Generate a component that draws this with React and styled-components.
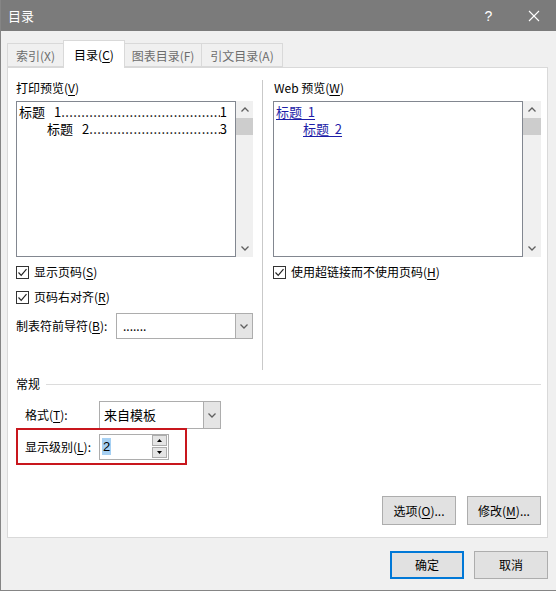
import React from "react";
import styled, { createGlobalStyle } from "styled-components";

const GlobalStyle = createGlobalStyle`
  html, body {
    margin: 0;
    padding: 0;
    background: #ffffff;
  }
  body {
    font-family: "Noto Sans CJK SC", "Noto Sans", "Liberation Sans", sans-serif;
    font-size: 12px;
    color: #000;
  }
`;

const Window = styled.div`
  width: 556px;
  height: 591px;
  box-sizing: border-box;
  background: #f0f0f0;
  border-left: 1px solid #858585;
  border-bottom: 1px solid #858585;
  display: flex;
  flex-direction: column;
  overflow: hidden;
`;

const TitleBar = styled.div`
  height: 31px;
  flex: none;
  background: #7b7b7b;
  color: #fff;
  display: flex;
  align-items: center;
  padding-left: 7px;
  font-size: 13px;
  line-height: 16px;
`;

const TitleText = styled.span`
  flex: 1;
`;

const TitleButton = styled.span`
  width: 45px;
  height: 31px;
  display: flex;
  align-items: center;
  justify-content: center;
  font-size: 14px;
  font-family: "Liberation Sans", sans-serif;
  color: #fff;
`;

const Body = styled.div`
  flex: 1;
  display: flex;
  flex-direction: column;
  padding: 9px 8px 0 6px;
`;

const TabStrip = styled.div`
  height: 27px;
  display: flex;
  align-items: flex-end;
  position: relative;
  z-index: 1;
`;

const Tab = styled.div`
  box-sizing: border-box;
  width: ${(p) => p.$w}px;
  height: ${(p) => (p.$active ? 28 : 24)}px;
  margin-bottom: ${(p) => (p.$active ? -1 : 0)}px;
  background: ${(p) => (p.$active ? "#fff" : "#f0f0f0")};
  border: 1px solid #d9d9d9;
  border-bottom: ${(p) => (p.$active ? "none" : "1px solid #d9d9d9")};
  margin-left: ${(p) => (p.$first ? 0 : -1)}px;
  color: ${(p) => (p.$active ? "#000" : "#6d6d6d")};
  display: flex;
  align-items: center;
  justify-content: center;
  line-height: 16px;
  padding-top: ${(p) => (p.$active ? 0 : 1)}px;
`;

const Panel = styled.div`
  height: 471px;
  box-sizing: border-box;
  background: #fff;
  border: 1px solid #d9d9d9;
  padding: 12px 6px 0 8px;
  display: flex;
  flex-direction: column;
`;

const Columns = styled.div`
  height: 290px;
  display: flex;
`;

const Column = styled.div`
  width: ${(p) => p.$w}px;
  flex: none;
  display: flex;
  flex-direction: column;
`;

const Separator = styled.div`
  width: 1px;
  background: #c9c9c9;
  margin: 0 10px 0 9px;
`;

const Label = styled.div`
  height: 16px;
  line-height: 16px;
  white-space: nowrap;
  padding-left: ${(p) => p.$indent || 0}px;
`;

const Key = styled.span`
  text-decoration: underline;
  text-underline-offset: 2px;
`;

const PreviewRow = styled.div`
  margin-top: 5px;
  height: 156px;
  display: flex;
`;

const ListBox = styled.div`
  flex: 1;
  min-width: 0;
  overflow: hidden;
  box-sizing: border-box;
  border: 1px solid #828790;
  background: #fff;
  padding: 1px 8px 0 2px;
  font-size: 13px;
  line-height: 17px;
`;

const TocLine = styled.div`
  display: flex;
  white-space: nowrap;
  padding-left: ${(p) => p.$level * 28}px;
`;

const TocNum = styled.span`
  margin-left: 9px;
`;

const Leader = styled.span`
  flex: 1;
  width: 0;
  min-width: 0;
  overflow: hidden;
  letter-spacing: 0.4px;
`;

const WebLink = styled.div`
  color: #1e1ea8;
  text-decoration: underline;
  text-underline-offset: 2px;
  white-space: pre;
  padding-left: ${(p) => p.$level * 27}px;
`;

const ScrollBar = styled.div`
  width: ${(p) => p.$w}px;
  flex: none;
  background: #f0f0f0;
  display: flex;
  flex-direction: column;
  align-items: center;
`;

const ScrollArrow = styled.div`
  height: 17px;
  width: 100%;
  display: flex;
  align-items: center;
  justify-content: center;
`;

const ScrollThumb = styled.div`
  width: 100%;
  height: 17px;
  background: #cdcdcd;
`;

const ScrollTrack = styled.div`
  flex: 1;
`;

const CheckRow = styled.div`
  margin-top: ${(p) => p.$mt}px;
  height: 16px;
  display: flex;
  align-items: center;
  gap: 5px;
  line-height: 16px;
  white-space: nowrap;
`;

const Box = styled.span`
  width: 13px;
  height: 13px;
  box-sizing: border-box;
  border: 1px solid #333;
  background: #fff;
  display: flex;
  align-items: center;
  justify-content: center;
`;

const FieldRow = styled.div`
  margin-top: ${(p) => p.$mt || 0}px;
  display: flex;
  align-items: center;
  padding-left: ${(p) => p.$indent || 0}px;
`;

const FieldLabel = styled.span`
  width: ${(p) => p.$w}px;
  flex: none;
  line-height: 16px;
  white-space: nowrap;
`;

const Combo = styled.div`
  width: ${(p) => p.$w}px;
  height: ${(p) => p.$h}px;
  box-sizing: border-box;
  border: 1px solid #adadad;
  background: #fff;
  display: flex;
`;

const ComboValue = styled.span`
  flex: 1;
  display: flex;
  align-items: center;
  padding-left: ${(p) => p.$pad || 4}px;
  font-size: ${(p) => p.$size || 12}px;
  line-height: 16px;
`;

const ComboButton = styled.span`
  width: 16px;
  background: #e5e5e5;
  border-left: 1px solid #adadad;
  display: flex;
  align-items: center;
  justify-content: center;
`;

const GroupHeader = styled.div`
  margin-top: 6px;
  height: 16px;
  display: flex;
  align-items: center;
  gap: 6px;
  line-height: 16px;
`;

const GroupLine = styled.div`
  flex: 1;
  height: 1px;
  background: #dcdcdc;
`;

const Highlight = styled.div`
  margin-top: -1px;
  width: 171px;
  height: 37px;
  box-sizing: border-box;
  border: 2px solid #c8161d;
  display: flex;
  align-items: center;
  padding-left: 7px;
`;

const Spinner = styled.div`
  width: 70px;
  height: 26px;
  box-sizing: border-box;
  border: 1px solid #adadad;
  background: #fff;
  display: flex;
  align-items: center;
  padding: 0 1px 0 2px;
`;

const SpinValue = styled.span`
  flex: 1;
  display: flex;
`;

const Selected = styled.span`
  background: #a6d0f3;
  font-size: 13px;
  line-height: 17px;
  padding: 0 1px;
  font-family: "Liberation Sans", sans-serif;
`;

const SpinButtons = styled.div`
  width: 15px;
  display: flex;
  flex-direction: column;
  gap: 1px;
`;

const SpinButton = styled.span`
  height: 11px;
  box-sizing: border-box;
  border: 1px solid #adadad;
  background: #e5e5e5;
  display: flex;
  align-items: center;
  justify-content: center;
`;

const ButtonRow = styled.div`
  margin-top: ${(p) => p.$mt}px;
  display: flex;
  justify-content: flex-end;
  gap: ${(p) => p.$gap}px;
  padding-right: ${(p) => p.$pr || 0}px;
`;

const Button = styled.div`
  width: 74px;
  height: ${(p) => p.$h}px;
  box-sizing: border-box;
  background: #e1e1e1;
  border: ${(p) => (p.$default ? "2px solid #0078d7" : "1px solid #adadad")};
  display: flex;
  align-items: center;
  justify-content: center;
  line-height: 16px;
  white-space: nowrap;
`;

const Chevron = ({ up, color = "#606060" }) => (
  <svg width="8" height="5" viewBox="0 0 8 5">
    <polyline
      points={up ? "0.5,4.5 4,1 7.5,4.5" : "0.5,0.5 4,4 7.5,0.5"}
      fill="none"
      stroke={color}
      strokeWidth="1.3"
    />
  </svg>
);

const Triangle = ({ up }) => (
  <svg width="5" height="3" viewBox="0 0 5 3">
    <polygon points={up ? "0,3 2.5,0 5,3" : "0,0 5,0 2.5,3"} fill="#000" />
  </svg>
);

const Check = () => (
  <svg width="11" height="11" viewBox="0 0 11 11">
    <polyline points="1.5,5.5 4.2,8.3 9.5,2.2" fill="none" stroke="#222" strokeWidth="1.2" />
  </svg>
);

const CloseIcon = () => (
  <svg width="12" height="12" viewBox="0 0 12 12">
    <line x1="1" y1="1" x2="11" y2="11" stroke="#fff" strokeWidth="1.1" />
    <line x1="11" y1="1" x2="1" y2="11" stroke="#fff" strokeWidth="1.1" />
  </svg>
);

const tabs = [
  { text: "索引(X)", w: 57 },
  { text: "目录", key: "C", w: 62, active: true },
  { text: "图表目录(F)", w: 78 },
  { text: "引文目录(A)", w: 82 },
];

const dots = ".".repeat(120);

function Scroll({ w }) {
  return (
    <ScrollBar $w={w}>
      <ScrollArrow>
        <Chevron up />
      </ScrollArrow>
      <ScrollThumb />
      <ScrollTrack />
      <ScrollArrow>
        <Chevron />
      </ScrollArrow>
    </ScrollBar>
  );
}

function CheckItem({ mt, text, k }) {
  return (
    <CheckRow $mt={mt}>
      <Box>
        <Check />
      </Box>
      <span>
        {text}(<Key>{k}</Key>)
      </span>
    </CheckRow>
  );
}

export default function App() {
  return (
    <>
      <GlobalStyle />
      <Window>
        <TitleBar>
          <TitleText>目录</TitleText>
          <TitleButton>?</TitleButton>
          <TitleButton>
            <CloseIcon />
          </TitleButton>
        </TitleBar>
        <Body>
          <TabStrip>
            {tabs.map((t, i) => (
              <Tab key={t.text} $w={t.w} $active={t.active} $first={i === 0}>
                {t.key ? (
                  <span>
                    {t.text}(<Key>{t.key}</Key>)
                  </span>
                ) : (
                  t.text
                )}
              </Tab>
            ))}
          </TabStrip>
          <Panel>
            <Columns>
              <Column $w={237}>
                <Label>
                  打印预览(<Key>V</Key>)
                </Label>
                <PreviewRow>
                  <ListBox>
                    <TocLine $level={0}>
                      <span>标题</span>
                      <TocNum>1</TocNum>
                      <Leader>{dots}</Leader>
                      <span>1</span>
                    </TocLine>
                    <TocLine $level={1}>
                      <span>标题</span>
                      <TocNum>2</TocNum>
                      <Leader>{dots}</Leader>
                      <span>3</span>
                    </TocLine>
                  </ListBox>
                  <Scroll w={17} />
                </PreviewRow>
                <CheckItem mt={7} text="显示页码" k="S" />
                <CheckItem mt={9} text="页码右对齐" k="R" />
                <FieldRow $mt={8}>
                  <FieldLabel $w={100}>
                    制表符前导符(<Key>B</Key>):
                  </FieldLabel>
                  <Combo $w={137} $h={26}>
                    <ComboValue $pad={6}>.......</ComboValue>
                    <ComboButton>
                      <Chevron />
                    </ComboButton>
                  </Combo>
                </FieldRow>
              </Column>
              <Separator />
              <Column $w={268}>
                <Label $indent={1}>
                  Web 预览(<Key>W</Key>)
                </Label>
                <PreviewRow>
                  <ListBox>
                    <WebLink $level={0}>{"标题  1"}</WebLink>
                    <WebLink $level={1}>{"标题  2"}</WebLink>
                  </ListBox>
                  <Scroll w={18} />
                </PreviewRow>
                <CheckItem mt={7} text="使用超链接而不使用页码" k="H" />
              </Column>
            </Columns>
            <GroupHeader>
              <span>常规</span>
              <GroupLine />
            </GroupHeader>
            <FieldRow $mt={9} $indent={9}>
              <FieldLabel $w={74}>
                格式(<Key>T</Key>):
              </FieldLabel>
              <Combo $w={122} $h={28}>
                <ComboValue $size={13} $pad={4}>
                  来自模板
                </ComboValue>
                <ComboButton>
                  <Chevron />
                </ComboButton>
              </Combo>
            </FieldRow>
            <Highlight>
              <FieldLabel $w={74}>
                显示级别(<Key>L</Key>):
              </FieldLabel>
              <Spinner>
                <SpinValue>
                  <Selected>2</Selected>
                </SpinValue>
                <SpinButtons>
                  <SpinButton>
                    <Triangle up />
                  </SpinButton>
                  <SpinButton>
                    <Triangle />
                  </SpinButton>
                </SpinButtons>
              </Spinner>
            </Highlight>
            <ButtonRow $mt={31} $gap={11}>
              <Button $h={29}>
                选项(<Key>O</Key>)...
              </Button>
              <Button $h={29}>
                修改(<Key>M</Key>)...
              </Button>
            </ButtonRow>
          </Panel>
          <ButtonRow $mt={13} $gap={10} $pr={0}>
            <Button $h={28} $default>
              确定
            </Button>
            <Button $h={28}>取消</Button>
          </ButtonRow>
        </Body>
      </Window>
    </>
  );
}
